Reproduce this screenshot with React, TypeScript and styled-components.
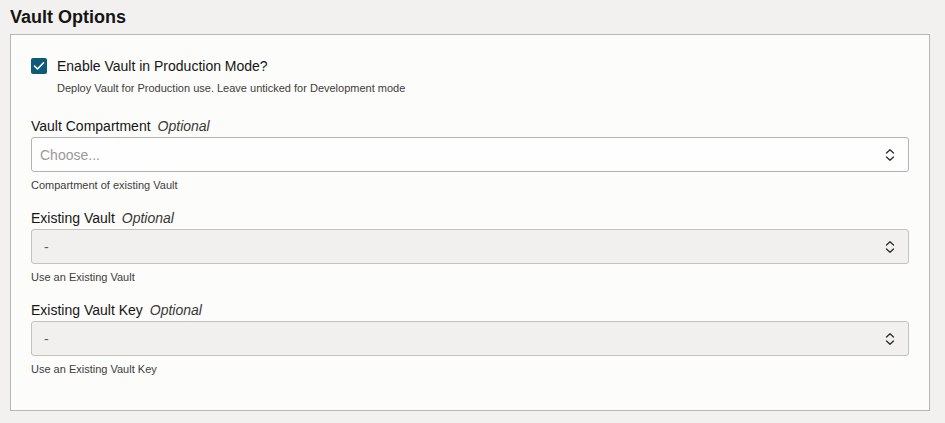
import React from "react";
import styled, { createGlobalStyle } from "styled-components";

const Global = createGlobalStyle`
  html, body { margin: 0; padding: 0; background: #f2f1f0; }
  body { font-family: "Liberation Sans", Arial, Helvetica, sans-serif; color: #161513; }
  * { box-sizing: border-box; }
`;

const Page = styled.div`
  padding: 7px 15px 0 10px;
  width: 945px;
`;

const Title = styled.h2`
  margin: 0 0 6px 0;
  font-size: 18px;
  line-height: 21px;
  font-weight: 700;
  color: #161513;
`;

const Panel = styled.div`
  background: #fcfcfb;
  border: 1px solid #b9b7b4;
  padding: 23px 20px 34px 20px;
  display: flex;
  flex-direction: column;
`;

const CheckRow = styled.label`
  display: flex;
  align-items: center;
  gap: 10px;
  height: 16px;
`;

const CheckBox = styled.span`
  width: 16px;
  height: 16px;
  border-radius: 2px;
  background: #0f5a7a;
  display: flex;
  align-items: center;
  justify-content: center;
`;

const CheckLabel = styled.span`
  font-size: 14px;
  color: #161513;
`;

const CheckHelp = styled.div`
  margin: 7px 0 0 26px;
  font-size: 11px;
  line-height: 14px;
  color: #3f3d3a;
`;

const Field = styled.div<{ $first?: boolean }>`
  display: flex;
  flex-direction: column;
  margin-top: ${(p) => (p.$first ? "23px" : "18px")};
`;

const Label = styled.div`
  font-size: 14px;
  line-height: 16px;
  color: #161513;
  margin-bottom: 3px;
`;

const Optional = styled.em`
  font-style: italic;
  margin-left: 7px;
  color: #3a3835;
`;

const Select = styled.div<{ $disabled?: boolean }>`
  height: 35px;
  border: 1px solid ${(p) => (p.$disabled ? "#c4c2bf" : "#b5b3b0")};
  border-radius: 3px;
  background: ${(p) => (p.$disabled ? "#f1f0ee" : "#fefefe")};
  display: flex;
  align-items: center;
  justify-content: space-between;
  padding: 0 13px 0 8px;
`;

const Value = styled.span<{ $placeholder?: boolean; $dash?: boolean }>`
  font-size: 14px;
  color: ${(p) => (p.$placeholder ? "#9b9996" : "#5f5d5a")};
  padding-left: ${(p) => (p.$dash ? "4px" : "0")};
`;

const Help = styled.div`
  margin-top: 6px;
  font-size: 11px;
  line-height: 14px;
  color: #3f3d3a;
`;

const Chevrons = () => (
  <svg width="10" height="16" viewBox="0 0 10 16" fill="none">
    <path d="M1.5 6 L5 2.8 L8.5 6" stroke="#2f2d2a" strokeWidth="1.3" strokeLinecap="round" strokeLinejoin="round" />
    <path d="M1.5 10 L5 13.2 L8.5 10" stroke="#2f2d2a" strokeWidth="1.3" strokeLinecap="round" strokeLinejoin="round" />
  </svg>
);

const fields = [
  { label: "Vault Compartment", value: "Choose...", placeholder: true, disabled: false, help: "Compartment of existing Vault" },
  { label: "Existing Vault", value: "-", placeholder: false, disabled: true, help: "Use an Existing Vault" },
  { label: "Existing Vault Key", value: "-", placeholder: false, disabled: true, help: "Use an Existing Vault Key" },
];

export default function App() {
  return (
    <>
      <Global />
      <Page>
        <Title>Vault Options</Title>
        <Panel>
          <CheckRow>
            <CheckBox>
              <svg width="12" height="10" viewBox="0 0 12 10" fill="none">
                <path d="M1.5 5 L4.5 8 L10.5 1.8" stroke="#ffffff" strokeWidth="1.6" strokeLinecap="round" strokeLinejoin="round" />
              </svg>
            </CheckBox>
            <CheckLabel>Enable Vault in Production Mode?</CheckLabel>
          </CheckRow>
          <CheckHelp>Deploy Vault for Production use. Leave unticked for Development mode</CheckHelp>
          {fields.map((f, i) => (
            <Field key={f.label} $first={i === 0}>
              <Label>
                {f.label}
                <Optional>Optional</Optional>
              </Label>
              <Select $disabled={f.disabled}>
                <Value $placeholder={f.placeholder} $dash={!f.placeholder}>{f.value}</Value>
                <Chevrons />
              </Select>
              <Help>{f.help}</Help>
            </Field>
          ))}
        </Panel>
      </Page>
    </>
  );
}
